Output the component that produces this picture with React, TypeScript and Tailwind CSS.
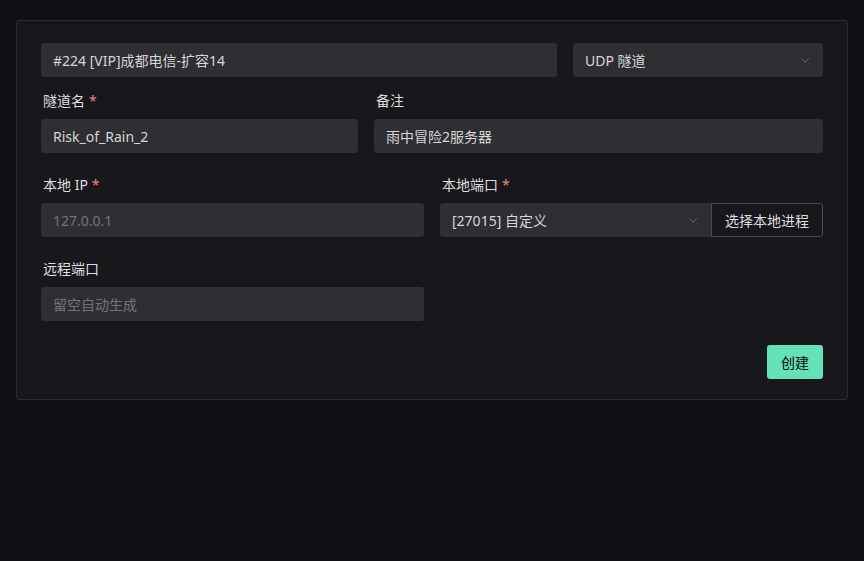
import React from "react";

const font = { fontFamily: '"Noto Sans", "Noto Sans CJK SC", sans-serif' };

function Chevron() {
  return (
    <svg width="12" height="12" viewBox="0 0 16 16" fill="none" className="text-[#6e6e72]">
      <path d="M3 6l5 5 5-5" stroke="currentColor" strokeWidth="1.2" strokeLinecap="round" strokeLinejoin="round" />
    </svg>
  );
}

function Label({ text, req }: { text: string; req?: boolean }) {
  return (
    <div className="h-[22px] leading-[22px] text-[14px] text-[#dededf] mb-[7px] pl-[2px] flex items-center">
      <span>{text}</span>
      {req && <span className="ml-[4px] text-[#e88080]">*</span>}
    </div>
  );
}

function Field({ value, placeholder, className = "" }: { value?: string; placeholder?: string; className?: string }) {
  return (
    <div className={`h-[34px] rounded-[3px] bg-[#2f2f33] px-[12px] flex items-center text-[14px] ${className}`}>
      {value ? <span className="text-[#d6d6d7]">{value}</span> : <span className="text-[#737377]">{placeholder}</span>}
    </div>
  );
}

function Select({ value, className = "" }: { value: string; className?: string }) {
  return (
    <div className={`h-[34px] rounded-[3px] bg-[#2f2f33] pl-[12px] pr-[12px] flex items-center justify-between text-[14px] ${className}`}>
      <span className="text-[#d6d6d7]">{value}</span>
      <Chevron />
    </div>
  );
}

export default function App() {
  return (
    <div className="min-h-[561px] w-[864px] bg-[#101014] pt-[20px] pl-[16px]" style={font}>
      <div className="w-[832px] border border-[#2b2b30] rounded-[3px] bg-[#18181c] px-[24px] pt-[22px] pb-[20px]">
        <div className="flex gap-[16px]">
          <Field value="#224 [VIP]成都电信-扩容14" className="w-[516px]" />
          <Select value="UDP 隧道" className="flex-1" />
        </div>

        <div className="flex gap-[16px] mt-[13px]">
          <div className="w-[317px]">
            <Label text="隧道名" req />
            <Field value="Risk_of_Rain_2" />
          </div>
          <div className="flex-1">
            <Label text="备注" />
            <Field value="雨中冒险2服务器" />
          </div>
        </div>

        <div className="flex gap-[16px] mt-[21px]">
          <div className="w-[383px]">
            <Label text="本地 IP" req />
            <Field placeholder="127.0.0.1" />
          </div>
          <div className="flex-1">
            <Label text="本地端口" req />
            <div className="flex">
              <Select value="[27015] 自定义" className="flex-1 rounded-r-none" />
              <div className="h-[34px] px-[13px] flex items-center border border-[#4a4a4e] rounded-r-[3px] bg-[#18181c] text-[14px] text-[#dededf]">
                选择本地进程
              </div>
            </div>
          </div>
        </div>

        <div className="mt-[21px] w-[383px]">
          <Label text="远程端口" />
          <Field placeholder="留空自动生成" />
        </div>

        <div className="flex justify-end mt-[24px]">
          <div className="h-[34px] px-[14px] flex items-center rounded-[3px] bg-[#63e2b7] text-[14px] text-[#000000]">
            创建
          </div>
        </div>
      </div>
    </div>
  );
}
